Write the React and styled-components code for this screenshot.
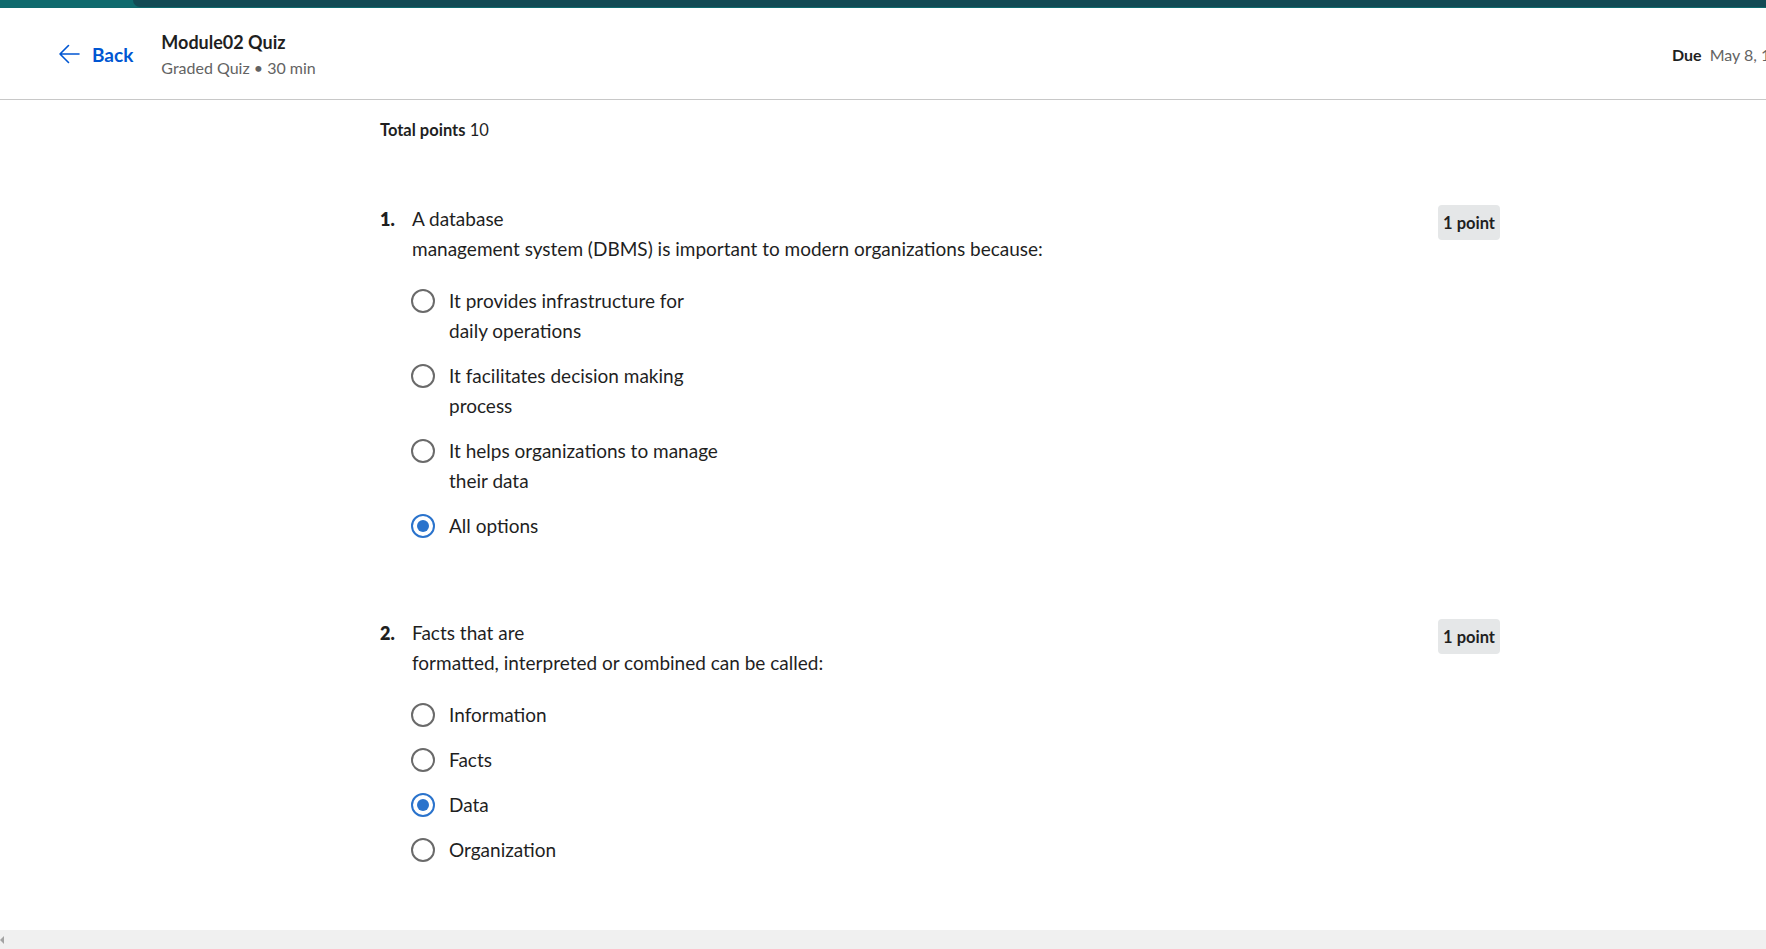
import React from "react";
import styled, { createGlobalStyle } from "styled-components";

const GlobalStyle = createGlobalStyle`
  html, body {
    margin: 0;
    padding: 0;
    background: #ffffff;
    overflow: hidden;
  }
  body {
    font-family: 'Lato', 'Noto Sans', sans-serif;
    color: #1f1f1f;
  }
`;

const Screen = styled.div`
  height: 100vh;
  display: flex;
  flex-direction: column;
  overflow: hidden;
`;

const Page = styled.div`
  flex: 1;
  width: 1880px;
  display: flex;
  flex-direction: column;
  overflow: hidden;
`;

const TopBar = styled.div`
  height: 8px;
  background-color: #0f6a6d;
  display: flex;
  flex-shrink: 0;
`;

const TopBarDark = styled.div`
  margin-left: 133px;
  flex: 1;
  height: 7px;
  background-color: #134a54;
  border-bottom-left-radius: 8px;
`;

const Header = styled.header`
  height: 91px;
  border-bottom: 1px solid #c8c8c8;
  display: flex;
  align-items: center;
  padding-left: 58px;
  flex-shrink: 0;
`;

const BackLink = styled.a`
  display: flex;
  align-items: center;
  gap: 12px;
  color: #0056d2;
  font-weight: 700;
  font-size: 19px;
  text-decoration: none;
  margin-top: 1px;
  cursor: pointer;
`;

const TitleBlock = styled.div`
  flex: 1;
  margin-left: 28px;
  display: flex;
  flex-direction: column;
  gap: 3px;
  margin-top: 1px;
`;

const Titulo = styled.h1`
  margin: 0;
  font-size: 18px;
  font-weight: 700;
  line-height: 24px;
  color: #1f1f1f;
`;

const Subtitulo = styled.div`
  font-size: 16px;
  line-height: 22px;
  color: #636363;
`;

const DueBlock = styled.div`
  width: 208px;
  flex-shrink: 0;
  white-space: nowrap;
  font-size: 16px;
  color: #636363;
  margin-top: 2px;

  strong {
    color: #1f1f1f;
    font-weight: 700;
    margin-right: 8px;
  }
`;

const Content = styled.main`
  width: 1120px;
  margin: 0 auto;
  padding-top: 18px;
  display: flex;
  flex-direction: column;
`;

const TotalPoints = styled.div`
  font-size: 16.5px;
  line-height: 24px;
  color: #1f1f1f;

  strong {
    font-weight: 700;
  }
`;

const Questao = styled.section`
  margin-top: ${(p) => p.$top}px;
  display: flex;
  flex-direction: column;
`;

const QuestaoTopo = styled.div`
  display: flex;
  align-items: flex-start;
`;

const Numero = styled.span`
  width: 32px;
  flex-shrink: 0;
  font-size: 18px;
  font-weight: 800;
  line-height: 30px;
`;

const Enunciado = styled.div`
  flex: 1;
  font-size: 19px;
  line-height: 30px;
  color: #1f1f1f;
`;

const Pontos = styled.span`
  margin-top: 1px;
  background-color: #e5e7e8;
  border-radius: 4px;
  padding: 0 5px;
  height: 35px;
  display: flex;
  align-items: center;
  font-size: 16.5px;
  font-weight: 700;
  color: #1f1f1f;
`;

const Opcoes = styled.div`
  margin-top: 22px;
  padding-left: 31px;
  display: flex;
  flex-direction: column;
  gap: 15px;
`;

const Opcao = styled.label`
  display: flex;
  align-items: flex-start;
  gap: 14px;
  font-size: 19px;
  line-height: 30px;
  color: #1f1f1f;
  cursor: pointer;
`;

const Radio = styled.span`
  margin-top: 3px;
  width: 24px;
  height: 24px;
  box-sizing: border-box;
  border-radius: 50%;
  border: ${(p) => (p.$checked ? "2.5px solid #2a73cc" : "2.5px solid #6a6a6a")};
  display: flex;
  align-items: center;
  justify-content: center;
  flex-shrink: 0;

  &::after {
    content: "";
    width: 12px;
    height: 12px;
    border-radius: 50%;
    background-color: #2a73cc;
    display: ${(p) => (p.$checked ? "block" : "none")};
  }
`;

const ScrollTrack = styled.div`
  height: 19px;
  flex-shrink: 0;
  background-color: #f0f0f0;
  display: flex;
  align-items: center;
`;

const ScrollArrow = styled.span`
  width: 0;
  height: 0;
  border-top: 4px solid transparent;
  border-bottom: 4px solid transparent;
  border-right: 4px solid #a3a3a3;
`;

const questoes = [
  {
    numero: "1.",
    top: 62,
    linhas: ["A database", "management system (DBMS) is important to modern organizations because:"],
    opcoes: [
      { linhas: ["It provides infrastructure for", "daily operations"] },
      { linhas: ["It facilitates decision making", "process"] },
      { linhas: ["It helps organizations to manage", "their data"] },
      { linhas: ["All options"], marcada: true },
    ],
  },
  {
    numero: "2.",
    top: 77,
    linhas: ["Facts that are", "formatted, interpreted or combined can be called:"],
    opcoes: [
      { linhas: ["Information"] },
      { linhas: ["Facts"] },
      { linhas: ["Data"], marcada: true },
      { linhas: ["Organization"] },
    ],
  },
];

const Linhas = ({ linhas }) =>
  linhas.map((l, i) => (
    <React.Fragment key={i}>
      {i > 0 && <br />}
      {l}
    </React.Fragment>
  ));

const BackArrow = () => (
  <svg width="22" height="20" viewBox="0 0 22 20" fill="none">
    <path d="M21 10H2M10.5 1.5L2 10l8.5 8.5" stroke="#0056d2" strokeWidth="1.6" strokeLinecap="round" strokeLinejoin="round" />
  </svg>
);

const App = () => {
  return (
    <Screen>
      <GlobalStyle />
      <Page>
        <TopBar>
          <TopBarDark />
        </TopBar>
        <Header>
          <BackLink>
            <BackArrow />
            Back
          </BackLink>
          <TitleBlock>
            <Titulo>Module02 Quiz</Titulo>
            <Subtitulo>Graded Quiz • 30 min</Subtitulo>
          </TitleBlock>
          <DueBlock>
            <strong>Due</strong>May 8, 11:59 PM PDT
          </DueBlock>
        </Header>
        <Content>
          <TotalPoints>
            <strong>Total points</strong> 10
          </TotalPoints>
          {questoes.map((q) => (
            <Questao key={q.numero} $top={q.top}>
              <QuestaoTopo>
                <Numero>{q.numero}</Numero>
                <Enunciado>
                  <Linhas linhas={q.linhas} />
                </Enunciado>
                <Pontos>1 point</Pontos>
              </QuestaoTopo>
              <Opcoes>
                {q.opcoes.map((o, i) => (
                  <Opcao key={i}>
                    <Radio $checked={!!o.marcada} />
                    <span>
                      <Linhas linhas={o.linhas} />
                    </span>
                  </Opcao>
                ))}
              </Opcoes>
            </Questao>
          ))}
        </Content>
      </Page>
      <ScrollTrack>
        <ScrollArrow />
      </ScrollTrack>
    </Screen>
  );
};

export default App;
